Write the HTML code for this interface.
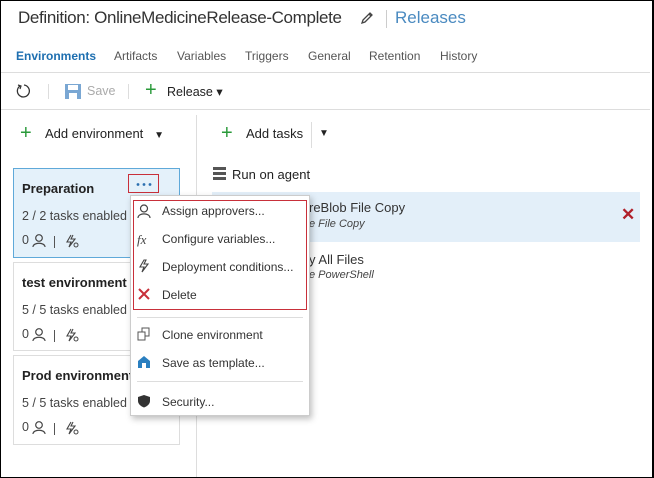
<!DOCTYPE html>
<html><head><meta charset="utf-8"><style>
*{margin:0;padding:0;box-sizing:border-box}
body{width:654px;height:478px;overflow:hidden;background:#fff;font-family:"Liberation Sans",sans-serif;color:#222;position:relative}
.a{position:absolute;white-space:nowrap}
.frame{position:absolute;left:0;top:0;width:654px;height:478px;border:1px solid #000;border-right-width:2px;pointer-events:none}
.tab{font-size:12px;color:#555;top:49px}
.card{position:absolute;left:13px;width:167px;border:1px solid #ddd;background:#fff}
.card b{position:absolute;left:8px;top:12px;font-size:13px}
.card .t{position:absolute;left:8px;top:40px;font-size:12.5px;color:#444}
.card .i{position:absolute;left:8px;top:64px;font-size:12.5px;color:#444}
.card .bar{position:absolute;left:40px;top:67px;width:1px;height:12px;background:#555}
.card svg{position:absolute;top:65px}
.mi{position:absolute;left:31px;font-size:12px;color:#333}
.ic{position:absolute;left:6px;width:14px;height:14px}
</style></head><body>
<div class="a" style="left:18px;top:8px;font-size:17px;letter-spacing:-0.35px;color:#333">Definition: OnlineMedicineRelease-Complete</div>
<svg class="a" style="left:360px;top:11px" width="14" height="14" viewBox="0 0 14 14"><path d="M2 12 L3 9 L10 2 L12 4 L5 11 Z M9 3 L11 5" fill="none" stroke="#444" stroke-width="1.3"/></svg>
<div class="a" style="left:386px;top:10px;width:1px;height:18px;background:#ccc"></div>
<div class="a" style="left:395px;top:8px;font-size:17px;color:#4a8ac0">Releases</div>
<div class="a tab" style="left:16px;color:#1e6fb0;font-weight:bold">Environments</div>
<div class="a tab" style="left:114px">Artifacts</div>
<div class="a tab" style="left:177px">Variables</div>
<div class="a tab" style="left:245px">Triggers</div>
<div class="a tab" style="left:308px">General</div>
<div class="a tab" style="left:369px">Retention</div>
<div class="a tab" style="left:440px">History</div>
<div class="a" style="left:0;top:72px;width:650px;height:1px;background:#ddd"></div>
<svg class="a" style="left:16px;top:83px" width="16" height="16" viewBox="0 0 16 16"><path d="M4 3 A6 6 0 1 0 8 2" fill="none" stroke="#333" stroke-width="1.3"/><path d="M2 2 L5 3 L4 6" fill="none" stroke="#333" stroke-width="1.2"/></svg>
<div class="a" style="left:48px;top:84px;width:1px;height:15px;background:#ddd"></div>
<svg class="a" style="left:65px;top:84px" width="16" height="15" viewBox="0 0 16 15"><rect x="0" y="0" width="16" height="15" fill="#7aa7d3"/><rect x="3" y="1" width="10" height="5" fill="#fff"/><rect x="4" y="9" width="8" height="6" fill="#fff"/></svg>
<div class="a" style="left:87px;top:84px;font-size:12.5px;color:#aaa">Save</div>
<div class="a" style="left:128px;top:84px;width:1px;height:15px;background:#ddd"></div>
<div class="a" style="left:145px;top:79px;font-size:20px;color:#2a9a3a">+</div>
<div class="a" style="left:167px;top:84px;font-size:12.5px">Release ▾</div>
<div class="a" style="left:0;top:109px;width:650px;height:1px;background:#ddd"></div>
<div class="a" style="left:196px;top:115px;width:1px;height:363px;background:#ddd"></div>
<div class="a" style="left:20px;top:122px;font-size:20px;color:#2a9a3a">+</div>
<div class="a" style="left:45px;top:126px;font-size:13px">Add environment &nbsp;&nbsp;<span style="font-size:10px">▼</span></div>
<div class="a" style="left:221px;top:122px;font-size:20px;color:#2a9a3a">+</div>
<div class="a" style="left:246px;top:126px;font-size:13px">Add tasks</div>
<div class="a" style="left:311px;top:122px;width:1px;height:26px;background:#ddd"></div>
<div class="a" style="left:319px;top:128px;font-size:10px">▼</div>
<svg class="a" style="left:213px;top:167px" width="13" height="13" viewBox="0 0 13 13"><g fill="#555"><rect x="0" y="0" width="13" height="3"/><rect x="0" y="5" width="13" height="3"/><rect x="0" y="10" width="13" height="3"/></g></svg>
<div class="a" style="left:232px;top:167px;font-size:13px">Run on agent</div>
<div class="a" style="left:212px;top:192px;width:428px;height:50px;background:#e3eff9"></div>
<div class="a" style="left:309px;top:200px;font-size:13px;color:#333">reBlob File Copy</div>
<div class="a" style="left:309px;top:218px;font-size:11px;font-style:italic;color:#444">e File Copy</div>
<div class="a" style="left:621px;top:205px;font-size:17px;color:#b0202a;font-weight:bold">✕</div>
<div class="a" style="left:309px;top:252px;font-size:13px;color:#333">y All Files</div>
<div class="a" style="left:309px;top:269px;font-size:11px;font-style:italic;color:#444">e PowerShell</div>

<div class="card" style="top:168px;height:90px;background:#e4f1fa;border-color:#5fa9d9"><b>Preparation</b><div class="t">2 / 2 tasks enabled</div><div class="i">0</div><div class="bar"></div>
<svg style="left:18px" width="14" height="13" viewBox="0 0 14 13"><circle cx="7" cy="4" r="3.3" fill="none" stroke="#444" stroke-width="1.2"/><path d="M1 13 C1 8 13 8 13 13" fill="none" stroke="#444" stroke-width="1.2"/></svg>
<svg style="left:51px" width="14" height="14" viewBox="0 0 14 14"><path d="M6 1 L2 8 H6 L4 13 L10 5 H6 L8 1" fill="none" stroke="#444" stroke-width="1.1"/><circle cx="11" cy="11" r="2" fill="none" stroke="#444"/></svg></div>
<div class="a" style="left:128px;top:174px;width:31px;height:19px;border:1px solid #c8303a"><svg class="a" style="left:7px;top:8px" width="16" height="3"><circle cx="2" cy="1.5" r="1.4" fill="#2a6fb0"/><circle cx="8" cy="1.5" r="1.4" fill="#2a6fb0"/><circle cx="14" cy="1.5" r="1.4" fill="#2a6fb0"/></svg></div>
<div class="card" style="top:262px;height:89px"><b>test environment</b><div class="t">5 / 5 tasks enabled</div><div class="i">0</div><div class="bar"></div>
<svg style="left:18px" width="14" height="13" viewBox="0 0 14 13"><circle cx="7" cy="4" r="3.3" fill="none" stroke="#444" stroke-width="1.2"/><path d="M1 13 C1 8 13 8 13 13" fill="none" stroke="#444" stroke-width="1.2"/></svg>
<svg style="left:51px" width="14" height="14" viewBox="0 0 14 14"><path d="M6 1 L2 8 H6 L4 13 L10 5 H6 L8 1" fill="none" stroke="#444" stroke-width="1.1"/><circle cx="11" cy="11" r="2" fill="none" stroke="#444"/></svg></div>
<div class="card" style="top:355px;height:90px"><b>Prod environment</b><div class="t">5 / 5 tasks enabled</div><div class="i">0</div><div class="bar"></div>
<svg style="left:18px" width="14" height="13" viewBox="0 0 14 13"><circle cx="7" cy="4" r="3.3" fill="none" stroke="#444" stroke-width="1.2"/><path d="M1 13 C1 8 13 8 13 13" fill="none" stroke="#444" stroke-width="1.2"/></svg>
<svg style="left:51px" width="14" height="14" viewBox="0 0 14 14"><path d="M6 1 L2 8 H6 L4 13 L10 5 H6 L8 1" fill="none" stroke="#444" stroke-width="1.1"/><circle cx="11" cy="11" r="2" fill="none" stroke="#444"/></svg></div>

<div class="a" style="left:130px;top:195px;width:180px;height:221px;background:#fff;border:1px solid #ccc;box-shadow:2px 3px 6px rgba(0,0,0,.25)">
 <div class="a" style="left:2px;top:4px;width:174px;height:110px;border:1px solid #c8303a"></div>
 <svg class="ic" style="top:8px" viewBox="0 0 14 14"><circle cx="7" cy="4.5" r="3.5" fill="none" stroke="#444" stroke-width="1.2"/><path d="M1 14 C1 8.5 13 8.5 13 14" fill="none" stroke="#444" stroke-width="1.2"/></svg><div class="mi" style="top:8px">Assign approvers...</div>
 <div class="ic" style="top:36px;font-size:13px;font-style:italic;font-family:'Liberation Serif',serif;color:#444">fx</div><div class="mi" style="top:36px">Configure variables...</div>
 <svg class="ic" style="top:63px" viewBox="0 0 14 14"><path d="M7 1 L3 8 H7 L5 13 L11 5 H7 L9 1 Z" fill="none" stroke="#444" stroke-width="1.1"/></svg><div class="mi" style="top:64px">Deployment conditions...</div>
 <svg class="ic" style="top:91px" viewBox="0 0 14 14"><path d="M2 2 L12 12 M12 2 L2 12" stroke="#c8303a" stroke-width="2"/></svg><div class="mi" style="top:92px">Delete</div>
 <div class="a" style="left:6px;top:121px;width:166px;height:1px;background:#ddd"></div>
 <svg class="ic" style="top:131px" viewBox="0 0 14 14"><rect x="1" y="5" width="7" height="8" fill="none" stroke="#555"/><path d="M5 5 V1 H12 V9 H8" fill="none" stroke="#555"/></svg><div class="mi" style="top:132px">Clone environment</div>
 <svg class="ic" style="top:159px" viewBox="0 0 14 14"><path d="M1 6 L7 1 L13 6 V13 H1 Z" fill="#2a7fc0"/><rect x="5" y="8" width="4" height="5" fill="#fff"/></svg><div class="mi" style="top:160px">Save as template...</div>
 <div class="a" style="left:6px;top:185px;width:166px;height:1px;background:#ddd"></div>
 <svg class="ic" style="top:198px" viewBox="0 0 14 14"><path d="M7 1 L13 3 V7 C13 10 10 12.5 7 13.5 C4 12.5 1 10 1 7 V3 Z" fill="#333"/></svg><div class="mi" style="top:199px">Security...</div>
</div>
<div class="frame"></div>
</body></html>
